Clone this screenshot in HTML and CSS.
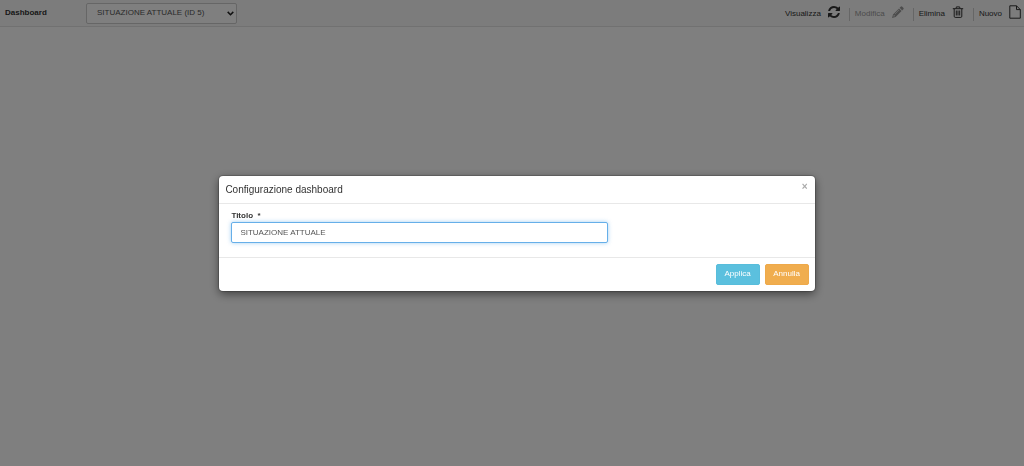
FILE: index.html
```html
<!DOCTYPE html>
<html lang="it">
<head>
<meta charset="utf-8">
<title>Dashboard</title>
<link rel="stylesheet" href="styles.css">
</head>
<body>
<header class="toolbar">
  <label class="toolbar-label" for="dashboard">Dashboard</label>
  <div class="select-wrap">
    <select class="select" id="dashboard"><option>SITUAZIONE ATTUALE (ID 5)</option></select>
    <svg class="chevron" viewBox="0 0 6 4"><path d="M.6.6 3 3 5.400.6" fill="none" stroke="currentColor" stroke-width="1.3"/></svg>
  </div>
  <nav class="actions">
    <button class="action" type="button">Visualizza
      <svg class="icon" viewBox="0 0 1536 1536"><path fill="currentColor" d="M1511 928q0 5-1 7-64 268-268 434.500T764 1536q-146 0-282.500-55T238 1324l-129 129q-19 19-45 19t-45-19-19-45V960q0-26 19-45t45-19h448q26 0 45 19t19 45-19 45l-137 137q71 66 161 102t187 36q134 0 250-65t186-179q11-17 53-117 8-23 30-23h192q13 0 22.500 9.500t9.500 22.500zm25-800v448q0 26-19 45t-45 19h-448q-26 0-45-19t-19-45 19-45l138-138Q969 256 768 256q-134 0-250 65T332 500q-11 17-53 117-8 23-30 23H50q-13 0-22.500-9.500T18 608v-7q65-268 270-434.500T768 0q146 0 284 55.500T1297 212l130-129q19-19 45-19t45 19 19 45z"/></svg>
    </button>
    <button class="action" type="button" disabled>Modifica
      <svg class="icon" viewBox="0 0 12 12"><path fill="currentColor" fill-rule="evenodd" d="M8.700.7q.8-.8 1.600 0l1 1q.8.8 0 1.600L10.200 4.400 7.600 1.800zM7 2.400 9.600 5 3.600 11 0 12 1 8.400zM1.700 9.200 1.400 10.600 2.800 10.300 2.800 9.600 2.400 9.600 2.400 9.200zM6.900 3.700 2.700 7.900 3.100 8.300 7.300 4.100z"/></svg>
    </button>
    <button class="action" type="button">Elimina
      <svg class="icon" viewBox="0 0 12 12"><path fill="none" stroke="currentColor" d="M.8 2.700H11.200M4 2.500 4.400.9H7.600L8 2.500M2.200 2.700V10.200Q2.200 11.400 3.200 11.400H8.800Q9.800 11.400 9.800 10.200V2.700M4.300 4.500V9.500M6 4.500V9.500M7.700 4.500V9.500"/></svg>
    </button>
    <button class="action" type="button">Nuovo
      <svg class="icon icon-file" viewBox="0 0 12 14"><path fill="none" stroke="currentColor" stroke-linejoin="round" d="M.8.800H7.500L11.300 4.600V13.200H.8zM7.500.8V4.600H11.300"/></svg>
    </button>
  </nav>
</header>
<div class="backdrop">
  <form class="dialog" role="dialog" aria-labelledby="dialog-title">
    <div class="dialog-head">
      <h1 class="dialog-title" id="dialog-title">Configurazione dashboard</h1>
      <button class="close" type="button" aria-label="Chiudi">×</button>
    </div>
    <div class="dialog-body">
      <label class="field-label" for="titolo">Titolo&nbsp; *</label>
      <input class="field" id="titolo" type="text" value="SITUAZIONE ATTUALE">
    </div>
    <div class="dialog-foot">
      <button class="btn btn-apply" type="button">Applica</button>
      <button class="btn btn-cancel" type="button">Annulla</button>
    </div>
  </form>
</div>
</body>
</html>
```
FILE: styles.css
```css
* { box-sizing: border-box; }
body {
  margin: 0;
  min-height: 100vh;
  background: #fff;
  color: #333;
  font: 8px/12px "Liberation Sans", Arial, sans-serif;
}
button, input, select { font: inherit; color: inherit; }
.toolbar {
  display: flex;
  align-items: center;
  height: 27px;
  padding: 0 3px 0 5px;
  background: #f8f8f8;
  border-bottom: 1px solid #e3e3e3;
}
.toolbar-label { width: 81px; font-weight: bold; }
.select-wrap { position: relative; width: 151px; }
.select {
  display: block;
  width: 100%;
  height: 21px;
  padding: 0 10px;
  appearance: none;
  background: #fff;
  border: 1px solid #ccc;
  border-radius: 2px;
  color: #555;
}
.chevron { position: absolute; right: 3px; top: 8px; width: 7px; height: 5px; color: #222; }
.actions { display: flex; align-items: center; margin-left: auto; }
.action {
  display: flex;
  align-items: center;
  gap: 7px;
  height: 13px;
  margin-top: 2px;
  padding: 0 9px 0 5px;
  background: none;
  border: 0;
  border-left: 1px solid #ccc;
}
.action:first-child { border-left: 0; }
.action:last-child { padding-right: 0; }
.action:disabled { color: #999; }
.icon { width: 12px; height: 12px; margin-top: -4px; flex: none; }
.icon-file { height: 14px; }
.backdrop {
  position: fixed;
  inset: 0;
  display: flex;
  align-items: center;
  justify-content: center;
  padding-left: 10px;
  background: rgba(0, 0, 0, .5);
}
.dialog {
  width: 58.700%;
  background: #fff;
  border-radius: 4px;
  box-shadow: 0 3px 10px rgba(0, 0, 0, .5), 0 0 1px 1px rgba(0, 0, 0, .2);
}
.dialog-head {
  display: flex;
  justify-content: space-between;
  padding: 6px;
  border-bottom: 1px solid #e8e8e8;
}
.dialog-title { margin: 0; font-size: 10px; line-height: 15px; font-weight: normal; }
.close {
  height: 10px;
  padding: 0 1px;
  background: none;
  border: 0;
  color: #aaa;
  font-size: 10px;
  line-height: 10px;
  font-weight: bold;
}
.dialog-body { padding: 5px 12px 14px; border-bottom: 1px solid #e8e8e8; }
.field-label { display: block; font-weight: bold; line-height: 13px; }
.field {
  display: block;
  width: 66%;
  height: 21px;
  padding: 0 8px;
  border: 1px solid #66afe9;
  border-radius: 2px;
  outline: 0;
  box-shadow: 0 0 4px rgba(102, 175, 233, .6);
  color: #555;
}
.dialog-foot { display: flex; justify-content: flex-end; gap: 5px; padding: 6px; }
.btn {
  width: 44px;
  height: 21px;
  padding: 0;
  border: 1px solid;
  border-radius: 2px;
  color: #fff;
}
.btn-apply { background: #5bc0de; border-color: #58bddb; }
.btn-cancel { background: #f0ad4e; border-color: #eea94a; }
```
